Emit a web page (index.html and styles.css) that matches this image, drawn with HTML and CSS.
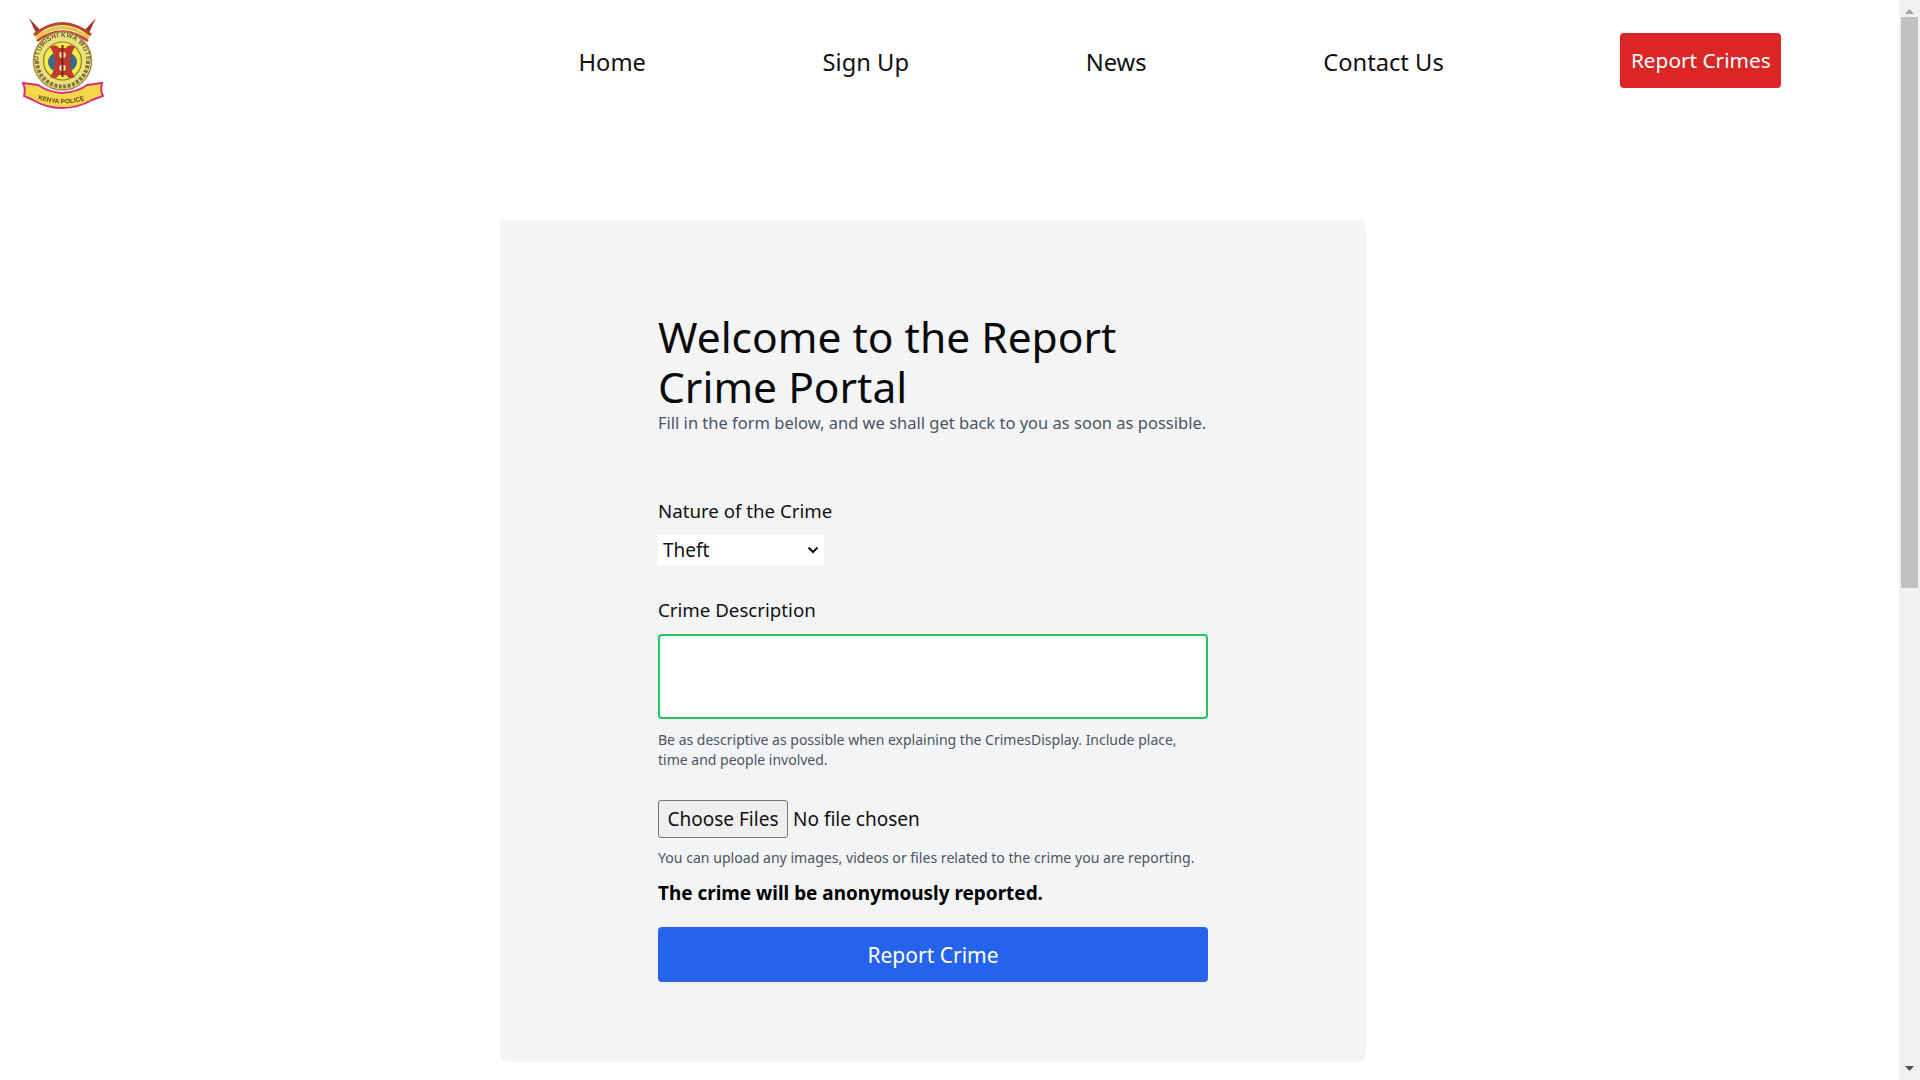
FILE: index.html
```html
<!DOCTYPE html>
<html lang="en">
<head>
    <meta charset="UTF-8">
    <meta name="viewport" content="width=device-width, initial-scale=1.0">
    <title>Report Crimes</title>
    <link rel="stylesheet" href="styles.css">
</head>
<body>
<div class="page">
    <div class="content">

        <!-- Navigation -->
        <header class="navbar">
            <a class="logo" href="#" aria-label="Kenya Police">
                <svg width="84" height="94" viewBox="21 16 84 94">
                    <defs>
                        <path id="ringPath" d="M38.5 61 A24 24 0 0 1 86.5 61"/>
                        <path id="scrollPath" d="M33 97 Q62 110 93 97"/>
                    </defs>
                    <!-- spears -->
                    <path d="M29 18 L41 31 L37 35 Z" fill="#a8322a"/>
                    <path d="M96 18 L84 31 L88 35 Z" fill="#a8322a"/>
                    <!-- top ribbon -->
                    <g fill="none">
                        <path d="M34 35 Q62 12 91 35" stroke="#b5472a" stroke-width="3"/>
                        <path d="M36 38 Q62 17 89 38" stroke="#e9c43f" stroke-width="3.5"/>
                        <path d="M37 41 Q62 22 88 41" stroke="#c2402f" stroke-width="2.5"/>
                        <path d="M41 43 Q62 28 84 43" stroke="#4a3d6b" stroke-width="3"/>
                    </g>
                    <!-- ring -->
                    <circle cx="62.5" cy="61" r="29" fill="#e9e27a" stroke="#a98a50" stroke-width="1.5"/>
                    <text class="logo-ring"><textPath href="#ringPath">UTUMISHI KWA WOTE</textPath></text>
                    <path d="M37 61 A25.5 25.5 0 0 0 88 61" fill="none" stroke="#6a5a30" stroke-width="4" stroke-dasharray="3 1.5" opacity="0.8"/>
                    <circle cx="62.5" cy="61" r="19" fill="#f6e94a" stroke="#8a7a30" stroke-width="1.2"/>
                    <!-- shield -->
                    <ellipse cx="62.5" cy="62" rx="14.5" ry="11" fill="#3a6a8a"/>
                    <path d="M50 47 Q56 43 59 48 L66 48 Q69 43 75 47 Q70 55 70 62 Q70 70 75 77 Q69 80 66 75 L59 75 Q56 80 50 77 Q55 70 55 62 Q55 55 50 47 Z" fill="#c23a2c"/>
                    <circle cx="62.5" cy="55" r="3.2" fill="#f8edb8"/>
                    <circle cx="62.5" cy="68" r="3.2" fill="#f8edb8"/>
                    <rect x="61.5" y="45" width="2" height="32" fill="#7a1f1a"/>
                    <!-- bottom scroll -->
                    <path d="M23 83 L38 85 Q48 92 62 93 Q78 92 87 85 L102 83 Q100 90 103 96 L92 100 Q78 108 62 108 Q46 108 33 100 L24 96 Q26 90 23 83 Z" fill="#f4d84a" stroke="#d8307a" stroke-width="2"/>
                    <text class="logo-scroll"><textPath href="#scrollPath" startOffset="5">KENYA POLICE</textPath></text>
                </svg>
            </a>
            <nav class="nav-links">
                <a href="#">Home</a>
                <a href="#">Sign Up</a>
                <a href="#">News</a>
                <a href="#">Contact Us</a>
                <a href="#" class="btn-report">Report Crimes</a>
            </nav>
        </header>

        <!-- Report form -->
        <main class="card">
            <form class="report-form">
                <h1>Welcome to the Report Crime Portal</h1>
                <p class="intro">Fill in the form below, and we shall get back to you as soon as possible.</p>

                <label class="field-label first" for="nature">Nature of the Crime</label>
                <div class="select-wrap">
                    <select id="nature" class="select">
                        <option>Theft</option>
                    </select>
                    <svg class="select-chevron" width="12" height="8" viewBox="0 0 12 8"><path d="M1.5 1.5 L6 6 L10.5 1.5" fill="none" stroke="#111" stroke-width="2"/></svg>
                </div>

                <label class="field-label second" for="description">Crime Description</label>
                <textarea id="description" class="textarea"></textarea>
                <p class="hint desc-hint">Be as descriptive as possible when explaining the CrimesDisplay. Include place, time and people involved.</p>

                <div class="file-row">
                    <button type="button" class="file-btn">Choose Files</button>
                    <span>No file chosen</span>
                </div>
                <p class="hint file-hint">You can upload any images, videos or files related to the crime you are reporting.</p>

                <p class="anon">The crime will be anonymously reported.</p>
                <button type="button" class="submit">Report Crime</button>
            </form>
        </main>
    </div>

    <!-- Scrollbar -->
    <div class="scrollbar">
        <svg class="arrow" width="9" height="5" viewBox="0 0 9 5"><path d="M4.5 0 L9 5 L0 5 Z" fill="#a3a3a3"/></svg>
        <div class="thumb"></div>
        <svg class="arrow arrow-down" width="9" height="5" viewBox="0 0 9 5"><path d="M0 0 L9 0 L4.5 5 Z" fill="#505050"/></svg>
    </div>
</div>
</body>
</html>
```

FILE: styles.css
```css
/* Global Styling */
* {
    box-sizing: border-box;
}

html, body {
    margin: 0;
    height: 100%;
    overflow: hidden;
}

body {
    font-family: "Noto Sans", "Open Sans", sans-serif;
    background-color: #fff;
    color: #000;
}

.page {
    display: flex;
    height: 1080px;
}

.content {
    flex: 1;
    min-width: 0;
}

/* Navbar */
.navbar {
    display: flex;
    height: 220px;
    padding: 16px 0 0 21px;
    align-items: flex-start;
}

.logo {
    display: block;
    width: 84px;
    height: 94px;
    filter: blur(0.5px);
}

.logo-ring {
    font-family: "Liberation Sans", sans-serif;
    font-size: 6.5px;
    font-weight: 700;
    letter-spacing: 0.3px;
    fill: #6a5a30;
}

.logo-scroll {
    font-family: "Liberation Sans", sans-serif;
    font-size: 6.5px;
    font-weight: 700;
    fill: #5a4a20;
}

.nav-links {
    display: flex;
    align-items: center;
    margin-left: 473.5px;
    padding-top: 17px;
}

.nav-links a {
    font-size: 23.7px;
    color: #111;
    text-decoration: none;
    margin-right: 176.7px;
    padding-top: 2px;
}

.nav-links .btn-report {
    margin-right: 0;
    background-color: #dc2626;
    color: #fff;
    font-size: 20.8px;
    padding: 0 10.5px;
    height: 55px;
    line-height: 55px;
    border-radius: 4px;
}

/* Card */
.card {
    width: 866px;
    height: 842px;
    margin-left: 500px;
    padding: 92px 158px 0;
    background-color: #f3f4f6;
    border-radius: 8px;
}

.report-form {
    width: 550px;
}

h1 {
    margin: 0;
    font-size: 42.5px;
    font-weight: 400;
    line-height: 50px;
    color: #0a0a0a;
}

.intro {
    margin: 0;
    font-size: 16.5px;
    line-height: 22px;
    color: #4b5563;
    white-space: nowrap;
}

.field-label {
    display: block;
    font-size: 18.7px;
    line-height: 28px;
    color: #111;
}

.field-label.first {
    margin-top: 63px;
}

.field-label.second {
    margin-top: 31px;
}

.select-wrap {
    position: relative;
    width: 166px;
    height: 30px;
    margin-top: 10px;
}

.select {
    display: block;
    width: 100%;
    height: 100%;
    padding: 0 5px;
    font-family: inherit;
    font-size: 19px;
    border: none;
    border-radius: 0;
    background-color: #fff;
    color: #111;
    appearance: none;
}

.select-chevron {
    position: absolute;
    top: 11px;
    right: 5px;
}

.textarea {
    display: block;
    width: 550px;
    height: 85px;
    margin-top: 10px;
    border: 2px solid #22c55e;
    border-radius: 4px;
    background-color: #fff;
    resize: none;
}

.hint {
    margin: 0;
    font-size: 14px;
    line-height: 20px;
    color: #4b5563;
}

.desc-hint {
    margin-top: 11px;
}

.file-row {
    display: flex;
    align-items: center;
    margin-top: 30px;
    font-size: 19px;
    color: #111;
}

.file-btn {
    height: 38px;
    width: 130px;
    padding: 0;
    margin-right: 5px;
    font-family: inherit;
    font-size: 19px;
    color: #111;
    background-color: #efefef;
    border: 1px solid #767676;
    border-radius: 3px;
}

.file-hint {
    margin-top: 10px;
    font-size: 14.1px;
}

.anon {
    margin: 11px 0 0;
    font-size: 18.95px;
    line-height: 28px;
    font-weight: 700;
}

.submit {
    display: block;
    width: 550px;
    height: 55px;
    margin-top: 20px;
    font-family: inherit;
    font-size: 21px;
    color: #fff;
    background-color: #2563eb;
    border: none;
    border-radius: 4px;
}

/* Scrollbar */
.scrollbar {
    display: flex;
    flex-direction: column;
    align-items: center;
    width: 21px;
    height: 1080px;
    background-color: #f1f1f1;
}

.arrow {
    flex: none;
    margin-top: 9px;
}

.arrow-down {
    margin-top: auto;
    margin-bottom: 9px;
}

.thumb {
    width: 17px;
    height: 571px;
    margin-top: 3px;
    background-color: #c1c1c1;
}
```
